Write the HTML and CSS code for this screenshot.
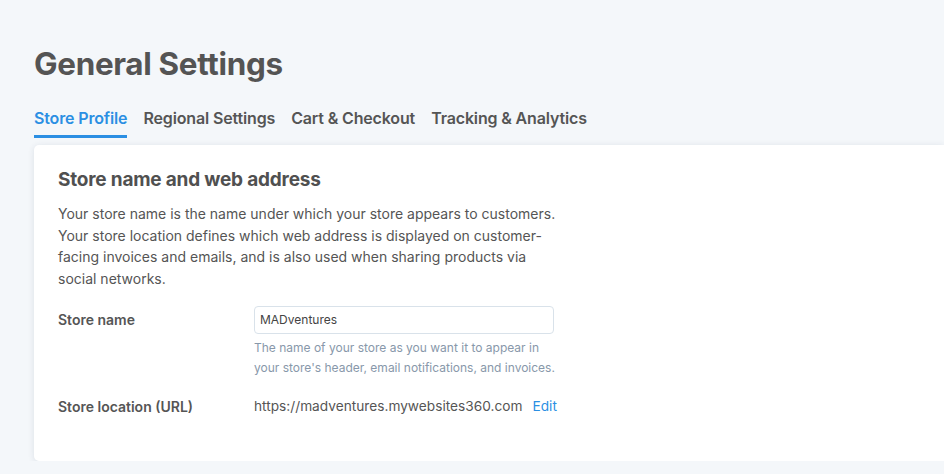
FILE: index.html
```html
<!DOCTYPE html>
<html>
<head>
<meta charset="utf-8">
<link rel="stylesheet" href="styles.css">
</head>
<body>
<div class="page">
  <h1 class="title">General Settings</h1>
  <nav class="tabs">
    <a class="tab active">Store Profile</a>
    <a class="tab">Regional Settings</a>
    <a class="tab">Cart &amp; Checkout</a>
    <a class="tab">Tracking &amp; Analytics</a>
  </nav>
  <section class="card">
    <h2 class="card-title">Store name and web address</h2>
    <p class="card-desc">Your store name is the name under which your store appears to customers. Your store location defines which web address is displayed on customer-facing invoices and emails, and is also used when sharing products via social networks.</p>
    <div class="row row-name">
      <div class="label">Store name</div>
      <div class="field">
        <div class="input">MADventures</div>
        <div class="help">The name of your store as you want it to appear in your store's header, email notifications, and invoices.</div>
      </div>
    </div>
    <div class="row row-url">
      <div class="label">Store location (URL)</div>
      <div class="field url">https://madventures.mywebsites360.com<a class="edit">Edit</a></div>
    </div>
  </section>
</div>
</body>
</html>
```
FILE: styles.css
```css
html, body {
  margin: 0;
  padding: 0;
  background: #f4f7fa;
  font-family: Inter, "Noto Sans", sans-serif;
  color: #555555;
}
.page {
  padding: 44px 0 0 34px;
}
.title {
  margin: 0;
  font-size: 31.4px;
  font-weight: 700;
  line-height: 40px;
  color: #545454;
  letter-spacing: -0.3px;
}
.tabs {
  display: flex;
  gap: 16px;
  margin-top: 24px;
}
.tab {
  font-size: 16px;
  font-weight: 600;
  line-height: 20px;
  color: #555555;
  padding-bottom: 7px;
  border-bottom: 3px solid transparent;
  letter-spacing: -0.15px;
}
.tab.active {
  color: #2b8fe3;
  border-bottom-color: #2b8fe3;
}
.card {
  margin-top: 7px;
  background: #ffffff;
  border-radius: 5px 0 0 5px;
  box-shadow: 0 1px 6px rgba(40, 60, 90, 0.12);
  padding: 22px 24px 32px 24px;
  height: 262px;
}
.card-title {
  margin: 0;
  font-size: 19px;
  font-weight: 700;
  line-height: 26px;
  color: #505050;
  letter-spacing: -0.2px;
}
.card-desc {
  margin: 10px 0 0 0;
  width: 500px;
  font-size: 14px;
  line-height: 21.7px;
  color: #555555;
}
.row {
  display: flex;
}
.row-name {
  margin-top: 16px;
}
.row-url {
  margin-top: 15px;
}
.label {
  width: 196px;
  font-size: 14px;
  font-weight: 600;
  color: #555555;
  line-height: 27px;
}
.input {
  box-sizing: border-box;
  width: 300px;
  height: 28px;
  border: 1px solid #d9e2ea;
  border-radius: 4px;
  padding: 0 5px;
  font-size: 12px;
  line-height: 26px;
  color: #444444;
}
.help {
  margin-top: 4px;
  width: 310px;
  font-size: 12px;
  line-height: 20px;
  color: #8898aa;
}
.url {
  font-size: 13.7px;
  line-height: 27px;
  color: #555555;
}
.edit {
  margin-left: 10px;
  color: #2b8fe3;
}
```
